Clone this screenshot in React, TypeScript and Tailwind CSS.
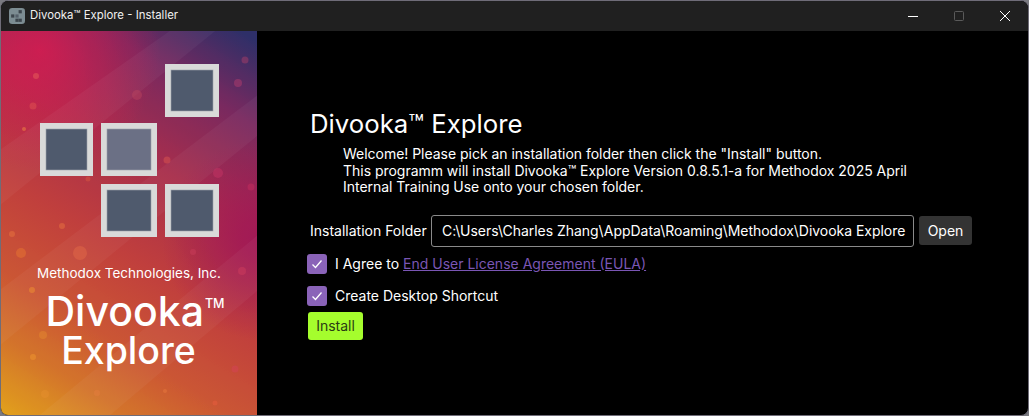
import React from "react";

const bokeh = [
  [36, 76, 3, "#f0705a"], [33, 106, 3.5, "#e8604f"], [24, 129, 2, "#ffa040"], [245, 60, 3.5, "#c0406a"],
  [238, 83, 4, "#c84070"], [137, 95, 5, "#c04860"], [167, 160, 3.5, "#e86050"], [218, 173, 5, "#d03868"],
  [251, 187, 3.5, "#d03060"], [88, 179, 2.5, "#e06040"], [62, 226, 3, "#f08040"], [12, 234, 3, "#f08040"],
  [21, 253, 5, "#f08030"], [80, 253, 7, "#e87048"], [193, 252, 3, "#d04060"], [32, 290, 3, "#f8a030"],
  [242, 271, 4, "#d84060"], [43, 335, 4, "#e89030"], [33, 357, 3, "#f8a030"], [45, 394, 4, "#e89030"],
  [97, 393, 3, "#e88040"], [165, 391, 2, "#f08040"], [215, 403, 2.5, "#f06040"], [235, 369, 3.5, "#d84060"],
];

const squares = [
  { x: 165, y: 64, w: 54, h: 53, fill: "#4f5a6d" },
  { x: 40, y: 123, w: 53, h: 53, fill: "#4f5a6d" },
  { x: 101, y: 123, w: 56, h: 53, fill: "#6b7085" },
  { x: 101, y: 184, w: 56, h: 53, fill: "#4f5a6d" },
  { x: 165, y: 184, w: 54, h: 53, fill: "#4f5a6d" },
];

function Artwork() {
  return (
    <svg className="absolute inset-0" width="256" height="384" viewBox="1 31 256 384">
      <defs>
        <linearGradient id="bg" x1="0" y1="415" x2="240" y2="31" gradientUnits="userSpaceOnUse">
          <stop offset="0" stopColor="#e2a21c" />
          <stop offset="0.15" stopColor="#d3742c" />
          <stop offset="0.28" stopColor="#cb5535" />
          <stop offset="0.45" stopColor="#c0403e" />
          <stop offset="0.65" stopColor="#a82f4c" />
          <stop offset="0.84" stopColor="#7a2a60" />
          <stop offset="1" stopColor="#2f3068" />
        </linearGradient>
        <radialGradient id="red" cx="40" cy="50" r="120" gradientUnits="userSpaceOnUse">
          <stop offset="0" stopColor="#e01a50" stopOpacity="0.75" />
          <stop offset="1" stopColor="#e01a50" stopOpacity="0" />
        </radialGradient>
        <radialGradient id="magenta" cx="262" cy="240" r="100" gradientUnits="userSpaceOnUse">
          <stop offset="0" stopColor="#a01558" stopOpacity="0.9" />
          <stop offset="1" stopColor="#a01558" stopOpacity="0" />
        </radialGradient>
      </defs>
      <rect x="0" y="31" width="258" height="384" fill="url(#bg)" />
      <rect x="0" y="31" width="258" height="384" fill="url(#red)" />
      <rect x="0" y="31" width="258" height="384" fill="url(#magenta)" />
      <g fill="#ffffff" opacity="0.035">
        <path d="M0 150 L170 31 L215 31 L0 205 Z" />
        <path d="M0 290 L258 95 L258 135 L0 345 Z" />
        <path d="M40 415 L258 235 L258 290 L110 415 Z" />
      </g>
      {bokeh.map(([cx, cy, r, c], i) => (
        <circle key={i} cx={cx as number} cy={cy as number} r={r as number} fill={c as string} opacity="0.4" />
      ))}
      {squares.map((s, i) => (
        <g key={i}>
          <rect x={s.x} y={s.y} width={s.w} height={s.h} fill="#d9dad9" />
          <rect x={s.x + 6} y={s.y + 6} width={s.w - 12} height={s.h - 12} fill={s.fill} stroke="#9da2ab" strokeWidth="0.6" />
        </g>
      ))}
    </svg>
  );
}

function CheckRow({ children }: { children: React.ReactNode }) {
  return (
    <div className="flex items-center gap-[8px] -ml-[1px]">
      <div className="w-5 h-5 rounded-[3px] bg-[#8a63b8] flex items-center justify-center">
        <svg width="12" height="12" viewBox="0 0 12 12" fill="none" stroke="#ffffff" strokeWidth="1.3">
          <path d="M1.5 6.5 L4.5 9.5 L10.5 2.5" />
        </svg>
      </div>
      {children}
    </div>
  );
}

export default function App() {
  return (
    <div className="w-[1029px] h-[416px] bg-[#7a7a80] overflow-hidden font-['Inter',sans-serif]">
      <div className="w-full h-full flex flex-col rounded-lg overflow-hidden border border-[#6f6c78] bg-black text-white">
        {/* title bar */}
        <div className="h-[30px] shrink-0 bg-[#202020] flex items-center pl-[8px]">
          <svg width="16" height="16" viewBox="0 0 15 15" className="mr-[5px]">
            <rect width="15" height="15" rx="3" fill="#7c8c92" />
            <rect x="9" y="2" width="3" height="3" fill="#3c454c" />
            <rect x="2" y="6" width="3" height="3" fill="#3c454c" />
            <rect x="6" y="6" width="3" height="3" fill="#55606a" />
            <rect x="6" y="10" width="3" height="3" fill="#3c454c" />
            <rect x="9" y="10" width="3" height="3" fill="#3c454c" />
          </svg>
          <span className="text-[11.4px] text-[#f0f0f0]">Divooka™ Explore - Installer</span>
          <div className="ml-auto flex items-center">
            <svg width="46" height="30" viewBox="0 0 46 30">
              <path d="M18 15.5 H28" stroke="#ffffff" strokeWidth="1" />
            </svg>
            <svg width="46" height="30" viewBox="0 0 46 30">
              <rect x="18.5" y="10.5" width="9" height="9" rx="1" fill="none" stroke="#5a5a5a" strokeWidth="1" />
            </svg>
            <svg width="46" height="30" viewBox="0 0 46 30">
              <path d="M18 10 L28 20 M28 10 L18 20" stroke="#ffffff" strokeWidth="1" />
            </svg>
          </div>
        </div>

        <div className="flex-1 flex min-h-0">
          {/* left banner */}
          <div className="relative w-[256px] shrink-0 overflow-hidden flex flex-col items-center">
            <Artwork />
            <div className="relative mt-[234px] text-[13.5px] leading-4 text-white">Methodox Technologies, Inc.</div>
            <div className="relative mt-[10px] ml-[12px] text-[41px] leading-[40px] font-medium text-white flex items-start">
              Divooka
              <span className="ml-[1px] text-[12.5px] leading-none font-medium mt-[7px]">TM</span>
            </div>
            <div className="relative mt-[1px] -ml-[1px] text-[37.5px] leading-[38px] font-medium text-white">Explore</div>
          </div>

          {/* main content */}
          <div className="flex-1 pl-[51px] pt-[77px]">
            <div className="text-[25.75px] leading-[32px] ml-[2px]">Divooka™ Explore</div>
            <div className="ml-[35px] mt-[6px] text-sm leading-[16.5px] tracking-[-0.025px] w-[580px]">
              <p>Welcome! Please pick an installation folder then click the "Install" button.</p>
              <p>This programm will install Divooka™ Explore Version 0.8.5.1-a for Methodox 2025 April</p>
              <p>Internal Training Use onto your chosen folder.</p>
            </div>
            <div className="mt-[19px] ml-[2px] flex items-center text-sm">
              <span className="w-[121px]">Installation Folder</span>
              <div className="w-[483px] h-[32px] rounded-[3px] border border-[#8a8a8a] flex items-center pl-[10px] whitespace-nowrap tracking-[-0.03px]">
                C:\Users\Charles Zhang\AppData\Roaming\Methodox\Divooka Explore
              </div>
              <div className="ml-[5px] w-[53px] h-[29px] rounded-[3px] bg-[#333333] flex items-center justify-center">Open</div>
            </div>
            <div className="mt-[7px] text-sm">
              <CheckRow>
                <span>
                  I Agree to <span className="text-[#7a56b4] underline">End User License Agreement (EULA)</span>
                </span>
              </CheckRow>
            </div>
            <div className="mt-[12px] text-sm">
              <CheckRow>
                <span>Create Desktop Shortcut</span>
              </CheckRow>
            </div>
            <div className="mt-[6px] w-[55px] h-[28px] rounded-[3px] bg-[#a5fd2d] text-[#2a3a14] text-sm flex items-center justify-center">
              Install
            </div>
          </div>
        </div>
      </div>
    </div>
  );
}
